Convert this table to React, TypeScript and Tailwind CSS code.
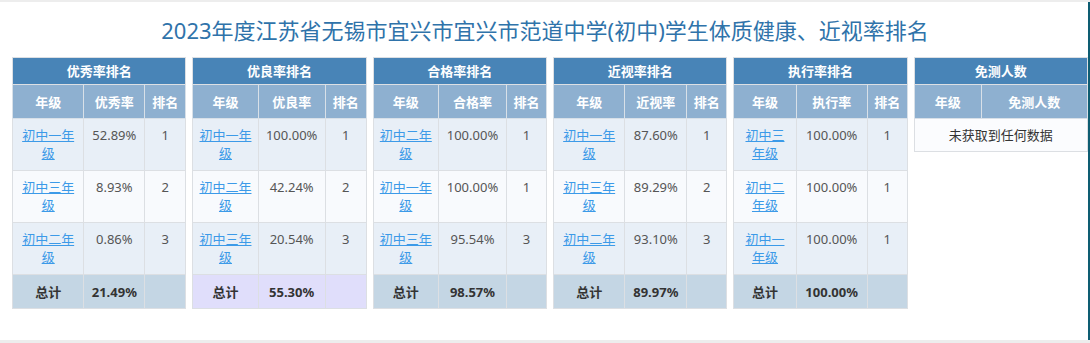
import React from "react";

type Row = { grade: string[]; value: string; rank: string };
type T = { title: string; col: string; widths: number[]; rows: Row[]; total: string; lavender?: boolean };

const g = (s: string, split: number) => [s.slice(0, split), s.slice(split)];

const tables: T[] = [
  {
    title: "优秀率排名", col: "优秀率", widths: [72, 61, 41], total: "21.49%",
    rows: [
      { grade: g("初中一年级", 4), value: "52.89%", rank: "1" },
      { grade: g("初中三年级", 4), value: "8.93%", rank: "2" },
      { grade: g("初中二年级", 4), value: "0.86%", rank: "3" },
    ],
  },
  {
    title: "优良率排名", col: "优良率", widths: [67, 67, 41], total: "55.30%", lavender: true,
    rows: [
      { grade: g("初中一年级", 4), value: "100.00%", rank: "1" },
      { grade: g("初中二年级", 4), value: "42.24%", rank: "2" },
      { grade: g("初中三年级", 4), value: "20.54%", rank: "3" },
    ],
  },
  {
    title: "合格率排名", col: "合格率", widths: [66, 68, 40], total: "98.57%",
    rows: [
      { grade: g("初中二年级", 4), value: "100.00%", rank: "1" },
      { grade: g("初中一年级", 4), value: "100.00%", rank: "1" },
      { grade: g("初中三年级", 4), value: "95.54%", rank: "3" },
    ],
  },
  {
    title: "近视率排名", col: "近视率", widths: [72, 62, 40], total: "89.97%",
    rows: [
      { grade: g("初中一年级", 4), value: "87.60%", rank: "1" },
      { grade: g("初中三年级", 4), value: "89.29%", rank: "2" },
      { grade: g("初中二年级", 4), value: "93.10%", rank: "3" },
    ],
  },
  {
    title: "执行率排名", col: "执行率", widths: [64, 71, 40], total: "100.00%",
    rows: [
      { grade: g("初中三年级", 3), value: "100.00%", rank: "1" },
      { grade: g("初中二年级", 3), value: "100.00%", rank: "1" },
      { grade: g("初中一年级", 3), value: "100.00%", rank: "1" },
    ],
  },
];

const font = { fontFamily: '"Noto Sans", "Noto Sans CJK SC", sans-serif' };

function RankTable({ t }: { t: T }) {
  return (
    <table className="w-full table-fixed border-collapse border border-[#dcdfe3] text-[13px] leading-[18px]">
      <colgroup>
        <col />
        <col style={{ width: t.widths[1] }} />
        <col style={{ width: t.widths[2] }} />
      </colgroup>
      <thead>
        <tr className="bg-[#4884b7] text-white">
          <th colSpan={3} className="h-[27px] border border-[#dcdfe3] p-0 font-bold">{t.title}</th>
        </tr>
        <tr className="bg-[#8eb0d0] text-white">
          <th className="h-[34px] border border-[#d8e0e8] p-0 font-bold">年级</th>
          <th className="h-[34px] border border-[#d8e0e8] p-0 font-bold">{t.col}</th>
          <th className="h-[34px] border border-[#d8e0e8] p-0 font-bold">排名</th>
        </tr>
      </thead>
      <tbody>
        {t.rows.map((r, i) => (
          <tr key={i} className={i % 2 === 1 ? "bg-[#f8fafd]" : "bg-[#e8eff7]"}>
            <td className="h-[52px] border border-[#dcdfe3] px-[4px] py-[7px] text-center align-top">
              <a href="#" className="text-[#3c9ae8] underline">
                {r.grade[0]}
                <br />
                {r.grade[1]}
              </a>
            </td>
            <td className="border border-[#dcdfe3] px-[4px] py-[7px] text-center align-top text-[#555555]">{r.value}</td>
            <td className="border border-[#dcdfe3] px-[4px] py-[7px] text-center align-top text-[#555555]">{r.rank}</td>
          </tr>
        ))}
        <tr className={t.lavender ? "bg-[#e0defb]" : "bg-[#c4d6e4]"}>
          <td className="h-[34px] border border-[#dcdfe3] p-0 text-center font-bold text-[#333333]">总计</td>
          <td className="border border-[#dcdfe3] p-0 text-center font-bold text-[#333333]">{t.total}</td>
          <td className="border border-[#dcdfe3] p-0"></td>
        </tr>
      </tbody>
    </table>
  );
}

function EmptyTable() {
  return (
    <table className="w-full table-fixed border-collapse border border-[#dcdfe3] text-[13px] leading-[18px]">
      <colgroup>
        <col style={{ width: 67 }} />
        <col />
      </colgroup>
      <thead>
        <tr className="bg-[#4884b7] text-white">
          <th colSpan={2} className="h-[27px] border border-[#dcdfe3] p-0 font-bold">免测人数</th>
        </tr>
        <tr className="bg-[#8eb0d0] text-white">
          <th className="h-[34px] border border-[#d8e0e8] p-0 font-bold">年级</th>
          <th className="h-[34px] border border-[#d8e0e8] p-0 font-bold">免测人数</th>
        </tr>
      </thead>
      <tbody>
        <tr className="bg-[#fbfcfe]">
          <td colSpan={2} className="h-[33px] border border-[#dcdfe3] p-0 text-center text-[#333333]">未获取到任何数据</td>
        </tr>
      </tbody>
    </table>
  );
}

export default function App() {
  return (
    <div className="h-[343px] w-[1090px] overflow-hidden bg-[#ededed] pt-[2px]" style={font}>
      <div className="flex h-[338px] w-[1090px] flex-col border-r-2 border-[#0e5d72] bg-white pl-[2px]">
        <div className="flex h-[55px] items-center justify-center pt-[1px]">
          <h1 className="text-[22px] font-normal leading-[28px] text-[#2f73aa]">
            2023年度江苏省无锡市宜兴市宜兴市范道中学(初中)学生体质健康、近视率排名
          </h1>
        </div>
        <div className="grid grid-cols-6 items-start gap-[6px] pl-[10px]">
          {tables.map((t) => (
            <RankTable key={t.title} t={t} />
          ))}
          <EmptyTable />
        </div>
      </div>
    </div>
  );
}
